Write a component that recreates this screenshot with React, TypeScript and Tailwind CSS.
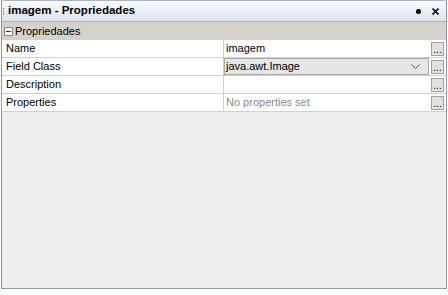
import React from "react";

function Dots() {
  return (
    <div className="w-[13px] h-[14px] border border-[#a0a0a0] bg-[#e1e1e1] flex items-end justify-center pb-[1px] text-[10px] leading-[8px] text-black shrink-0">
      ...
    </div>
  );
}

function Row({ label, children }: { label: string; children?: React.ReactNode }) {
  return (
    <div className="flex h-[18px] border-b border-[#d4d0c8] bg-white">
      <div className="w-[222px] border-r border-[#d4d0c8] pl-[4px] flex items-center text-[11px] text-black">{label}</div>
      <div className="flex-1 flex items-center pr-[2px]">{children}</div>
    </div>
  );
}

export default function App() {
  return (
    <div className="w-[448px] h-[295px] bg-white overflow-hidden font-['Liberation_Sans',Arial,sans-serif]">
      <div className="ml-[1px] w-[446px] h-[289px] flex flex-col border-l border-r border-b border-[#8c9aab]">
        <div className="h-[22px] shrink-0 flex items-center border-t border-b border-[#a5b3c4] rounded-t-[3px] bg-gradient-to-b from-[#fbfcfe] to-[#dbe3ee] pl-[1px] pr-[7px]">
          <div className="flex flex-col gap-[1px] mr-[4px]">
            <div className="w-[1px] h-[1px] bg-[#777]" />
            <div className="w-[1px] h-[1px] bg-[#777]" />
            <div className="w-[1px] h-[1px] bg-[#777]" />
            <div className="w-[1px] h-[1px] bg-[#777]" />
          </div>
          <span className="text-[11.5px] font-bold text-black">imagem - Propriedades</span>
          <div className="flex-1" />
          <div className="w-[5px] h-[5px] rounded-full bg-black mr-[11px]" />
          <svg width="7" height="7" viewBox="0 0 7 7"><path d="M0.5 0.5 L6.5 6.5 M6.5 0.5 L0.5 6.5" stroke="#111" strokeWidth="1.6" /></svg>
        </div>
        <div className="h-[18px] shrink-0 flex items-center bg-[#d6d2cb] pl-[2px] gap-[2px]">
          <div className="w-[9px] h-[9px] border border-[#888] bg-white flex items-center justify-center">
            <div className="w-[5px] h-[1px] bg-[#333]" />
          </div>
          <span className="text-[11px] text-black">Propriedades</span>
        </div>
        <Row label="Name">
          <span className="flex-1 pl-[2px] text-[11px] text-black">imagem</span>
          <Dots />
        </Row>
        <Row label="Field Class">
          <div className="flex-1 h-[17px] mr-[2px] border border-[#a8a8a8] bg-[#e6e6e6] flex items-center pl-[1px] pr-[8px] text-[11px] text-black">
            <span className="flex-1">java.awt.Image</span>
            <svg width="9" height="5" viewBox="0 0 9 5"><path d="M0.5 0.5 L4.5 4.5 L8.5 0.5" fill="none" stroke="#555" strokeWidth="1" /></svg>
          </div>
          <Dots />
        </Row>
        <Row label="Description">
          <span className="flex-1" />
          <Dots />
        </Row>
        <Row label="Properties">
          <span className="flex-1 pl-[2px] text-[11px] text-[#8a8a8a]">No properties set</span>
          <Dots />
        </Row>
        <div className="flex-1 bg-[#efefef]" />
      </div>
    </div>
  );
}
